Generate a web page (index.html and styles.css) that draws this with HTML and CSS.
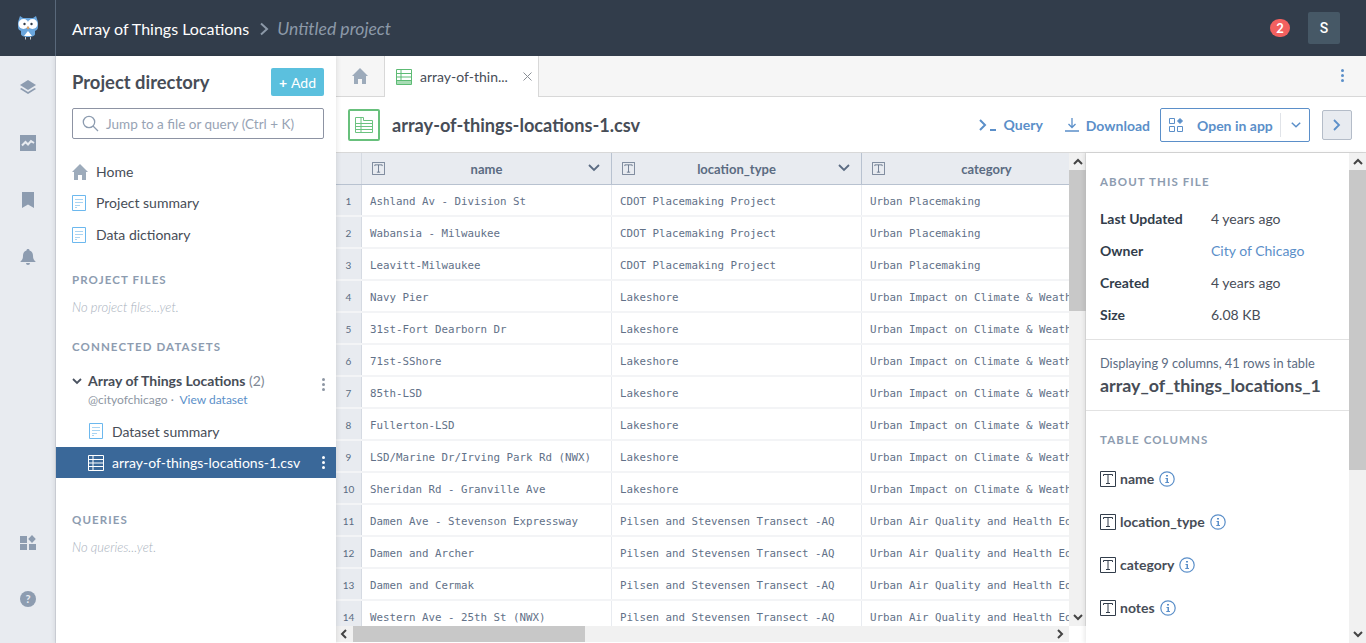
FILE: index.html
```html
<!DOCTYPE html>
<html lang="en">
<head>
    <meta charset="UTF-8">
    <title>array-of-things-locations-1.csv</title>
    <link rel="stylesheet" href="styles.css">
</head>
<body>
    <svg class="sprites" width="0" height="0">
        <symbol id="i-home" viewBox="0 0 16 16"><path d="M8 0 0 8h2v8h4v-5h4v5h4V8h2z"/></symbol>
        <symbol id="i-doc" viewBox="0 0 14 16"><path d="M.5.5h13v15H.5z" fill="#fff" stroke="#6cb8ee"/><path d="M3 4h8v1H3zM3 7h8v1H3zM3 10h5v1H3zM3 12h2v1H3z" fill="#a9d4f2"/></symbol>
        <symbol id="i-type" viewBox="0 0 16 16"><path d="M.5.5h15v15H.5z" fill="none" stroke="currentColor"/><path d="M3.5 5V3.500h9V5M8 3.500v9M6 12.500h4" fill="none" stroke="currentColor"/></symbol>
        <symbol id="i-info" viewBox="0 0 16 16"><circle cx="8" cy="8" r="7.200" fill="none" stroke="#5b8fc9" stroke-width="1.200"/><path d="M7 4h2v1.600H7zM6.500 7H9v4h1v1H6.300v-1h1.200V8h-1z" fill="#5b8fc9"/></symbol>
        <symbol id="i-up" viewBox="0 0 10 7"><path d="m1 6 4-4 4 4" fill="none" stroke="#444" stroke-width="2"/></symbol>
        <symbol id="i-down" viewBox="0 0 10 7"><path d="m1 1 4 4 4-4" fill="none" stroke="#444" stroke-width="2"/></symbol>
    </svg>

    <header class="topbar">
        <div class="logo-cell">
            <svg width="22" height="26" viewBox="0 0 22 26">
                <path d="M3 1l3 2h10l3-2 2 6v5c0 2-1 3-3 4v3c0 2-3 3-7 3s-7-1-7-3v-3c-2-1-3-2-3-4V7z" fill="#6aa6dd"/>
                <circle cx="6.500" cy="9" r="5" fill="#fff"/><circle cx="15.500" cy="9" r="5" fill="#fff"/>
                <circle cx="7.500" cy="9" r="1.200" fill="#323d4b"/><circle cx="14.500" cy="9" r="1.200" fill="#323d4b"/>
                <path d="M11 11l-1.500 2 1.500 1.500 1.500-1.500z" fill="#e0a060"/>
                <path d="M7 21l4-5 4 5z" fill="#fff"/>
                <path d="M8.500 22v2.500M13.500 22v2.500" stroke="#c9ccd0"/>
            </svg>
        </div>
        <div class="crumbs">
            <span class="crumb-owner">Array of Things Locations</span>
            <svg class="crumb-sep" width="10" height="14" viewBox="0 0 10 14"><path d="M2 1.500 8 7l-6 5.500" fill="none" stroke="#8c99a8" stroke-width="2"/></svg>
            <span class="crumb-project">Untitled project</span>
        </div>
        <span class="badge">2</span>
        <span class="avatar">S</span>
    </header>

    <div class="app">
        <nav class="rail">
            <div class="rail-top">
                <svg width="16" height="16" viewBox="0 0 16 16" fill="#8d9cb0"><path d="M8 1 0 6l8 5 8-5z"/><path d="M1.500 9 0 10l8 5 8-5-1.500-1L8 13z"/></svg>
                <svg width="16" height="16" viewBox="0 0 16 16"><path d="M0 0h16v16H0z" fill="#8d9cb0"/><path d="M2 10.500 5.500 7l2.500 2.500L11 6l3 2" fill="none" stroke="#e8ebf0" stroke-width="2"/></svg>
                <svg class="rail-bookmark" width="12" height="16" viewBox="0 0 12 16" fill="#8d9cb0"><path d="M0 0h12v16L6 12.500 0 16z"/></svg>
                <svg width="16" height="16" viewBox="0 0 16 16" fill="#8d9cb0"><path d="M8 0c1 0 1.500.6 1.500 1.400C12 2 13 4 13 7c0 3 1 4 2.500 5.500v.5H.5v-.5C2 11 3 10 3 7c0-3 1-5 3.500-5.600C6.500.6 7 0 8 0zM6 14h4a2 2 0 0 1-4 0z"/></svg>
            </div>
            <div class="rail-bottom">
                <svg width="16" height="16" viewBox="0 0 16 16" fill="#8d9cb0"><path d="M0 1h7v7H0zM0 9h7v6H0zM9 9h7v6H9zM12 0l3.800 4-3.800 4-3.800-4z"/></svg>
                <svg width="16" height="16" viewBox="0 0 16 16"><circle cx="8" cy="8" r="8" fill="#8d9cb0"/><text x="8" y="12" text-anchor="middle" font-family="Lato" font-weight="700" font-size="11" fill="#e8ebf0">?</text></svg>
            </div>
        </nav>

        <aside class="sidebar">
            <div class="dir-head">
                <h2>Project directory</h2>
                <span class="add-btn"><b>+</b>Add</span>
            </div>
            <div class="search">
                <svg width="17" height="17" viewBox="0 0 17 17" fill="none" stroke="#8d9cb0" stroke-width="1.300"><circle cx="7" cy="7" r="5.700"/><path d="m11 11 5 5"/></svg>
                <span>Jump to a file or query (Ctrl + K)</span>
            </div>
            <ul class="nav-list">
                <li class="nav-home"><svg class="home-icon" width="16" height="16"><use href="#i-home"/></svg>Home</li>
                <li><svg width="14" height="16"><use href="#i-doc"/></svg>Project summary</li>
                <li><svg width="14" height="16"><use href="#i-doc"/></svg>Data dictionary</li>
            </ul>
            <h3 class="section-title files-title">PROJECT FILES</h3>
            <p class="empty">No project files...yet.</p>
            <h3 class="section-title conn-title">CONNECTED DATASETS</h3>
            <div class="dataset">
                <svg class="caret" width="10" height="7" viewBox="0 0 10 7"><path d="m1 1 4 4 4-4" fill="none" stroke="#4a5260" stroke-width="1.800"/></svg>
                <div class="dataset-text">
                    <div class="dataset-name"><b>Array of Things Locations</b> <span>(2)</span></div>
                    <div class="dataset-sub">@cityofchicago <i>·</i> <a>View dataset</a></div>
                </div>
                <span class="dots dots-gray"><i></i><i></i><i></i></span>
            </div>
            <div class="file-row">
                <svg width="14" height="16"><use href="#i-doc"/></svg>Dataset summary
            </div>
            <div class="file-row active">
                <svg width="16" height="16" viewBox="0 0 16 16" fill="none" stroke="#fff"><path d="M.5.500h15v15H.5zM.5 4.500h15M.5 8h15M.5 11.500h15M5 .5v15"/></svg>array-of-things-locations-1.csv
                <span class="dots dots-white"><i></i><i></i><i></i></span>
            </div>
            <h3 class="section-title queries-title">QUERIES</h3>
            <p class="empty">No queries...yet.</p>
        </aside>

        <main class="main">
            <div class="tabs">
                <div class="tab-home"><svg width="16" height="16"><use href="#i-home"/></svg></div>
                <div class="tab">
                    <svg width="16" height="16" viewBox="0 0 16 16" fill="none" stroke="#5dbb74"><path d="M.5.500h15v15H.5z"/><path d="M.5 4.500h15M.5 8h15M.5 11.500h15M5 .5v15"/><path d="M1 12h14v3H1z" fill="#a8dcb5" stroke="none"/></svg>
                    <span class="tab-name">array-of-thin...</span>
                    <svg class="tab-x" width="9" height="9" viewBox="0 0 9 9"><path d="m.5.500 8 8m0-8-8 8" stroke="#8a8f96"/></svg>
                </div>
                <span class="dots dots-blue"><i></i><i></i><i></i></span>
            </div>

            <div class="file-head">
                <div class="file-badge">
                    <svg width="18" height="16" viewBox="0 0 18 16" fill="none" stroke="#6cc280"><path d="M.5.500h8v3h9v12H.5zM.5 6.500h17M.5 9.500h17M.5 12.500h17M6 .5v15"/></svg>
                </div>
                <h1>array-of-things-locations-1.csv</h1>
                <div class="file-actions">
                    <a class="action action-query">
                        <svg width="18" height="12" viewBox="0 0 18 12" fill="none" stroke="#5b8fc9" stroke-width="2"><path d="m1 1 5 5-5 5M11 11h6"/></svg>
                        Query
                    </a>
                    <a class="action action-download">
                        <svg width="14" height="14" viewBox="0 0 14 14" fill="none" stroke="#5b8fc9" stroke-width="1.300"><path d="M7 0v9M3.500 6 7 9.500 10.500 6M0 13h14"/></svg>
                        Download
                    </a>
                    <div class="open-app">
                        <svg width="14" height="14" viewBox="0 0 14 14" fill="none" stroke="#5b8fc9"><path d="M.5.500h5v5h-5zM.5 8.500h5v5h-5zM8.500 8.500h5v5h-5z"/><path d="m11 .5 2.500 2.500L11 5.500 8.500 3z" fill="#5b8fc9"/></svg>
                        <span>Open in app</span>
                        <em></em>
                        <svg width="10" height="6" viewBox="0 0 10 6"><path d="m.8.800 4.200 4 4.200-4" fill="none" stroke="#5b8fc9" stroke-width="1.500"/></svg>
                    </div>
                    <div class="collapse-btn">
                        <svg width="8" height="12" viewBox="0 0 8 12"><path d="m1 1 5 5-5 5" fill="none" stroke="#5b8fc9" stroke-width="1.800"/></svg>
                    </div>
                </div>
            </div>

            <div class="content">
                <section class="table-wrap">
                    <div class="table-scroll">
                        <div class="t-row t-head">
                            <div class="t-num"></div>
                            <div class="t-cell"><svg class="t-icon" width="13" height="13"><use href="#i-type"/></svg><span>name</span><svg class="t-sort" width="12" height="8" viewBox="0 0 12 8"><path d="m1 1 5 5 5-5" fill="none" stroke="#5b6b82" stroke-width="1.800"/></svg></div>
                            <div class="t-cell"><svg class="t-icon" width="13" height="13"><use href="#i-type"/></svg><span>location_type</span><svg class="t-sort" width="12" height="8" viewBox="0 0 12 8"><path d="m1 1 5 5 5-5" fill="none" stroke="#5b6b82" stroke-width="1.800"/></svg></div>
                            <div class="t-cell"><svg class="t-icon" width="13" height="13"><use href="#i-type"/></svg><span>category</span></div>
                        </div>
                        <div class="t-row"><div class="t-num">1</div><div class="t-cell">Ashland Av - Division St</div><div class="t-cell">CDOT Placemaking Project</div><div class="t-cell">Urban Placemaking</div></div>
                        <div class="t-row"><div class="t-num">2</div><div class="t-cell">Wabansia - Milwaukee</div><div class="t-cell">CDOT Placemaking Project</div><div class="t-cell">Urban Placemaking</div></div>
                        <div class="t-row"><div class="t-num">3</div><div class="t-cell">Leavitt-Milwaukee</div><div class="t-cell">CDOT Placemaking Project</div><div class="t-cell">Urban Placemaking</div></div>
                        <div class="t-row"><div class="t-num">4</div><div class="t-cell">Navy Pier</div><div class="t-cell">Lakeshore</div><div class="t-cell">Urban Impact on Climate &amp; Weather</div></div>
                        <div class="t-row"><div class="t-num">5</div><div class="t-cell">31st-Fort Dearborn Dr</div><div class="t-cell">Lakeshore</div><div class="t-cell">Urban Impact on Climate &amp; Weather</div></div>
                        <div class="t-row"><div class="t-num">6</div><div class="t-cell">71st-SShore</div><div class="t-cell">Lakeshore</div><div class="t-cell">Urban Impact on Climate &amp; Weather</div></div>
                        <div class="t-row"><div class="t-num">7</div><div class="t-cell">85th-LSD</div><div class="t-cell">Lakeshore</div><div class="t-cell">Urban Impact on Climate &amp; Weather</div></div>
                        <div class="t-row"><div class="t-num">8</div><div class="t-cell">Fullerton-LSD</div><div class="t-cell">Lakeshore</div><div class="t-cell">Urban Impact on Climate &amp; Weather</div></div>
                        <div class="t-row"><div class="t-num">9</div><div class="t-cell">LSD/Marine Dr/Irving Park Rd (NWX)</div><div class="t-cell">Lakeshore</div><div class="t-cell">Urban Impact on Climate &amp; Weather</div></div>
                        <div class="t-row"><div class="t-num">10</div><div class="t-cell">Sheridan Rd - Granville Ave</div><div class="t-cell">Lakeshore</div><div class="t-cell">Urban Impact on Climate &amp; Weather</div></div>
                        <div class="t-row"><div class="t-num">11</div><div class="t-cell">Damen Ave - Stevenson Expressway</div><div class="t-cell">Pilsen and Stevensen Transect -AQ</div><div class="t-cell">Urban Air Quality and Health Equity</div></div>
                        <div class="t-row"><div class="t-num">12</div><div class="t-cell">Damen and Archer</div><div class="t-cell">Pilsen and Stevensen Transect -AQ</div><div class="t-cell">Urban Air Quality and Health Equity</div></div>
                        <div class="t-row"><div class="t-num">13</div><div class="t-cell">Damen and Cermak</div><div class="t-cell">Pilsen and Stevensen Transect -AQ</div><div class="t-cell">Urban Air Quality and Health Equity</div></div>
                        <div class="t-row"><div class="t-num">14</div><div class="t-cell">Western Ave - 25th St (NWX)</div><div class="t-cell">Pilsen and Stevensen Transect -AQ</div><div class="t-cell">Urban Air Quality and Health Equity</div></div>
                    </div>
                    <div class="vbar table-vbar">
                        <svg class="arrow" width="10" height="7"><use href="#i-up"/></svg>
                        <div class="thumb"></div>
                        <svg class="arrow arrow-end" width="10" height="7"><use href="#i-down"/></svg>
                    </div>
                    <div class="hbar">
                        <svg width="8" height="10" viewBox="0 0 8 10"><path d="M6 1 2 5l4 4" fill="none" stroke="#444" stroke-width="2"/></svg>
                        <div class="hthumb"></div>
                        <svg class="hbar-right" width="8" height="10" viewBox="0 0 8 10"><path d="m2 1 4 4-4 4" fill="none" stroke="#444" stroke-width="2"/></svg>
                    </div>
                </section>

                <aside class="about">
                    <div class="about-body">
                        <div class="about-block">
                            <h3 class="section-title">ABOUT THIS FILE</h3>
                            <dl class="meta">
                                <dt>Last Updated</dt><dd>4 years ago</dd>
                                <dt>Owner</dt><dd><a>City of Chicago</a></dd>
                                <dt>Created</dt><dd>4 years ago</dd>
                                <dt>Size</dt><dd>6.08 KB</dd>
                            </dl>
                        </div>
                        <div class="table-block">
                            <p>Displaying 9 columns, 41 rows in table</p>
                            <strong>array_of_things_locations_1</strong>
                        </div>
                        <div class="columns-block">
                            <h3 class="section-title">TABLE COLUMNS</h3>
                            <div class="col-item"><svg class="col-type" width="16" height="16"><use href="#i-type"/></svg><b>name</b><svg width="16" height="16"><use href="#i-info"/></svg></div>
                            <div class="col-item"><svg class="col-type" width="16" height="16"><use href="#i-type"/></svg><b>location_type</b><svg width="16" height="16"><use href="#i-info"/></svg></div>
                            <div class="col-item"><svg class="col-type" width="16" height="16"><use href="#i-type"/></svg><b>category</b><svg width="16" height="16"><use href="#i-info"/></svg></div>
                            <div class="col-item"><svg class="col-type" width="16" height="16"><use href="#i-type"/></svg><b>notes</b><svg width="16" height="16"><use href="#i-info"/></svg></div>
                        </div>
                    </div>
                    <div class="vbar about-vbar">
                        <svg class="arrow" width="10" height="7"><use href="#i-up"/></svg>
                        <div class="thumb"></div>
                        <svg class="arrow arrow-end" width="10" height="7"><use href="#i-down"/></svg>
                    </div>
                </aside>
            </div>
        </main>
    </div>
</body>
</html>
```

FILE: styles.css
```css
* {
    box-sizing: border-box;
}
html, body {
    margin: 0;
    height: 100%;
    overflow: hidden;
}
body {
    font-family: Lato, "Liberation Sans", sans-serif;
    color: #474d57;
    background: #fff;
    font-size: 14px;
}
.sprites {
    position: absolute;
}
h1, h2, h3, p, ul, dl, dd {
    margin: 0;
    padding: 0;
}

/* top bar */
.topbar {
    height: 56px;
    background: #323d4b;
    display: flex;
    align-items: center;
}
.logo-cell {
    width: 56px;
    height: 56px;
    border-right: 1px solid #59687a;
    display: flex;
    align-items: center;
    justify-content: center;
}
.crumbs {
    flex: 1;
    display: flex;
    align-items: center;
    padding-left: 16px;
    font-size: 16px;
    color: #fff;
}
.crumb-sep {
    margin: 1px 8px 0 10px;
}
.crumb-project {
    font-style: italic;
    font-size: 17.600px;
    color: #8c99a8;
}
.badge {
    width: 20px;
    height: 18px;
    border-radius: 9px;
    background: #f2605f;
    color: #fff;
    font-size: 13px;
    font-weight: 700;
    text-align: center;
    line-height: 18px;
    margin-right: 18px;
}
.avatar {
    width: 32px;
    height: 32px;
    margin-right: 26px;
    border-radius: 2px;
    background: #465866;
    color: #fff;
    font-family: Roboto, sans-serif;
    font-weight: 500;
    font-size: 14px;
    line-height: 32px;
    text-align: center;
}

.app {
    display: flex;
    height: 587px;
}

/* icon rail */
.rail {
    width: 56px;
    background: #e8ebf0;
    border-right: 1px solid #d5d9e0;
    display: flex;
    flex-direction: column;
    justify-content: space-between;
    align-items: center;
    padding: 23px 0 36px;
}
.rail-top, .rail-bottom {
    display: flex;
    flex-direction: column;
    align-items: center;
    gap: 40px;
}
.rail-bookmark {
    margin: 1px 0;
}

/* project directory */
.sidebar {
    width: 280px;
    background: #fff;
    position: relative;
    box-shadow: 2px 0 4px rgba(0, 0, 0, .07), -2px 0 4px rgba(0, 0, 0, .07);
    z-index: 2;
}
.dir-head {
    display: flex;
    justify-content: space-between;
    padding: 12px 12px 0 16px;
    height: 52px;
}
.dir-head h2 {
    font-size: 18.400px;
    font-weight: 700;
    line-height: 29px;
    color: #474d57;
}
.add-btn {
    width: 53px;
    height: 28px;
    border-radius: 2px;
    background: #5bc0de;
    color: #fff;
    font-size: 14px;
    line-height: 29px;
    text-align: center;
}
.add-btn b {
    margin-right: 4px;
}
.search {
    margin: 0 12px 0 16px;
    height: 31px;
    border: 1px solid #8d93a3;
    border-radius: 2px;
    display: flex;
    align-items: center;
    gap: 7px;
    padding-left: 9px;
    color: #97a3b4;
    font-size: 13.500px;
}
.nav-list {
    list-style: none;
    margin-top: 17px;
    padding-left: 16px;
}
.nav-list li {
    height: 32px;
    display: flex;
    align-items: center;
    gap: 10px;
    font-size: 14px;
    color: #474d57;
    padding-bottom: 3px;
}
.nav-list .nav-home {
    padding-bottom: 1px;
}
.nav-list .home-icon {
    fill: #9dabbb;
    margin-right: -2px;
}
.section-title {
    font-size: 11.500px;
    font-weight: 700;
    letter-spacing: 1.100px;
    color: #8d9cb0;
    line-height: 14px;
}
.sidebar .section-title {
    margin-left: 16px;
}
.files-title {
    margin-top: 21px;
}
.empty {
    margin: 12px 0 0 16px;
    font-size: 13px;
    font-style: italic;
    font-weight: 300;
    color: #a8b1bd;
    line-height: 16px;
}
.conn-title {
    margin-top: 25px;
}
.dataset {
    margin-top: 18px;
    display: flex;
    padding-left: 16px;
    height: 43px;
    position: relative;
}
.caret {
    margin-top: 6px;
}
.dataset-text {
    margin-left: 6px;
}
.dataset-name {
    font-size: 14px;
    line-height: 18px;
}
.dataset-name span {
    color: #7e8794;
}
.dataset-sub {
    margin-top: 1px;
    font-size: 12px;
    line-height: 17px;
    color: #8d96a3;
}
.dataset-sub i {
    margin-right: 3px;
    font-style: normal;
}
.dataset-sub a {
    color: #5b8fc9;
}
.file-row {
    height: 32px;
    display: flex;
    align-items: center;
    gap: 9px;
    padding-left: 33px;
    font-size: 14px;
    position: relative;
}
.file-row.active {
    height: 31px;
    background: #3a6899;
    color: #fff;
}
.active svg {
    margin-left: -1px;
    margin-right: -1px;
}
.dots {
    position: absolute;
    display: flex;
    flex-direction: column;
    gap: 2px;
}
.dots i {
    display: block;
    width: 3px;
    height: 3px;
    border-radius: 50%;
    background: currentColor;
}
.dots-gray {
    right: 11px;
    top: 6px;
    color: #8d96a3;
}
.dots-white {
    right: 11px;
    top: 9px;
    color: #fff;
}
.dots-blue {
    right: 22px;
    top: 13px;
    color: #5b8fc9;
}
.queries-title {
    margin-top: 35px;
}

/* main column */
.main {
    width: 1030px;
    display: flex;
    flex-direction: column;
}
.tabs {
    height: 41px;
    background: #f6f6f6;
    border-bottom: 1px solid #d8d8d8;
    display: flex;
    position: relative;
}
.tab-home {
    width: 48px;
    display: flex;
    align-items: center;
    justify-content: center;
    fill: #9dabbb;
}
.tab {
    width: 155px;
    height: 41px;
    background: #fff;
    border-left: 1px solid #d8d8d8;
    border-right: 1px solid #d8d8d8;
    display: flex;
    align-items: center;
    padding-left: 11px;
    gap: 8px;
    font-size: 14px;
    color: #474d57;
}
.tab-name {
    width: 93px;
    white-space: nowrap;
}
.tab-x {
    margin-left: 2px;
}
.file-head {
    height: 55px;
    display: flex;
    align-items: center;
    padding-left: 12px;
}
.file-badge {
    width: 32px;
    height: 32px;
    border: 2px solid #68c07c;
    border-radius: 2px;
    display: flex;
    align-items: center;
    justify-content: center;
}
.file-head h1 {
    margin-left: 12px;
    font-size: 18.150px;
    font-weight: 700;
    color: #474d57;
    white-space: nowrap;
}
.file-actions {
    margin-left: auto;
    display: flex;
    align-items: center;
    padding-right: 14px;
}
.action {
    display: flex;
    align-items: center;
    gap: 7px;
    font-size: 14px;
    font-weight: 700;
    color: #5b8fc9;
    margin-right: 22px;
    white-space: nowrap;
}
.action-download {
    margin-right: 10px;
    padding-top: 1px;
}
.open-app {
    width: 150px;
    height: 34px;
    border: 1px solid #5b8fc9;
    border-radius: 2px;
    display: flex;
    align-items: center;
    padding-left: 8px;
    color: #5b8fc9;
    font-size: 14px;
    font-weight: 700;
}
.open-app span {
    margin-left: 14px;
    padding-top: 1px;
    white-space: nowrap;
}
.open-app em {
    width: 1px;
    height: 24px;
    background: #e0e3e8;
    margin: 0 10px 0 7px;
}
.collapse-btn {
    width: 30px;
    height: 30px;
    margin-left: 12px;
    background: #e8ebf0;
    border: 1px solid #b4bcc8;
    border-radius: 2px;
    display: flex;
    align-items: center;
    justify-content: center;
}

.content {
    flex: 1;
    display: flex;
    min-height: 0;
    border-top: 1px solid #d8d8d8;
}

/* table */
.table-wrap {
    width: 750px;
    position: relative;
    overflow: hidden;
}
.table-scroll {
    height: 473px;
    width: 733px;
    overflow: hidden;
}
.t-row {
    display: flex;
    height: 32px;
    font-family: "DejaVu Sans Mono", monospace;
    font-size: 10.800px;
    color: #627188;
    border-bottom: 2px solid #f3f4f6;
    white-space: nowrap;
}
.t-num {
    width: 26px;
    flex: none;
    background: #e8ebf0;
    border-right: 1px solid #d5dae2;
    font-family: Lato, sans-serif;
    font-size: 10px;
    color: #5b6b82;
    text-align: center;
    line-height: 32px;
}
.t-cell {
    width: 250px;
    flex: none;
    padding: 1px 0 0 8px;
    line-height: 32px;
    border-right: 1px solid #e8ebf0;
    overflow: hidden;
}
.t-head {
    height: 32px;
    background: #e8ebf0;
    border-bottom: 1px solid #b8c2d0;
    font-family: Lato, sans-serif;
    font-size: 13px;
    font-weight: 700;
    color: #5b6b82;
}
.t-head .t-cell {
    display: flex;
    align-items: center;
    position: relative;
    padding: 0 0 0 10px;
    line-height: 30px;
    border-right: 1px solid #b8c2d0;
}
.t-head .t-cell span {
    position: absolute;
    left: 0;
    right: 0;
    text-align: center;
}
.t-sort {
    position: absolute;
    right: 11px;
    top: 11px;
}

/* scrollbars */
.vbar {
    position: absolute;
    top: 0;
    bottom: 0;
    width: 17px;
    background: #f1f1f1;
    display: flex;
    flex-direction: column;
    align-items: center;
}
.arrow {
    flex: none;
    margin: 5px 0;
}
.arrow-end {
    margin-top: auto;
}
.thumb {
    width: 100%;
    background: #c8c8c8;
}
.table-vbar {
    right: 0;
    bottom: auto;
    height: 473px;
    box-shadow: inset -1px 0 0 #e0e0e0;
}
.table-vbar .thumb {
    height: 141px;
}
.hbar {
    position: absolute;
    left: 0;
    right: 17px;
    top: 473px;
    height: 16px;
    background: #f1f1f1;
    display: flex;
    align-items: center;
    padding-left: 4px;
}
.hthumb {
    width: 232px;
    height: 16px;
    margin-left: 5px;
    background: #c8c8c8;
}
.hbar-right {
    margin-left: auto;
    margin-right: 5px;
}

/* about panel */
.about {
    width: 280px;
    position: relative;
    background: #fff;
    box-shadow: -2px 0 4px rgba(0, 0, 0, .08);
}
.about-body {
    width: 263px;
}
.about-block {
    padding: 22px 14px 0;
    height: 187px;
    border-bottom: 1px solid #e2e2e2;
}
.meta {
    display: grid;
    grid-template-columns: 111px 1fr;
    grid-auto-rows: 32px;
    margin-top: 14px;
    line-height: 32px;
}
.meta dt {
    font-weight: 700;
    color: #323d4b;
}
.meta dd {
    color: #474d57;
}
.meta a {
    color: #5b8fc9;
}
.table-block {
    height: 71px;
    padding: 14px 14px 0;
    border-bottom: 1px solid #e2e2e2;
}
.table-block p {
    font-size: 12.800px;
    color: #5b6b82;
    line-height: 19px;
}
.table-block strong {
    display: block;
    font-size: 17.850px;
    color: #474d57;
    line-height: 25px;
    white-space: nowrap;
}
.columns-block {
    padding: 22px 14px 0;
}
.col-item {
    height: 43px;
    display: flex;
    align-items: center;
    gap: 4px;
    font-size: 14px;
    color: #474d57;
}
.col-item:first-of-type {
    margin-top: 10px;
}
.col-item b {
    margin-right: 1px;
}
.col-type {
    color: #323d4b;
}
.about-vbar {
    right: 0;
}
.about-vbar .thumb {
    height: 300px;
}
```
